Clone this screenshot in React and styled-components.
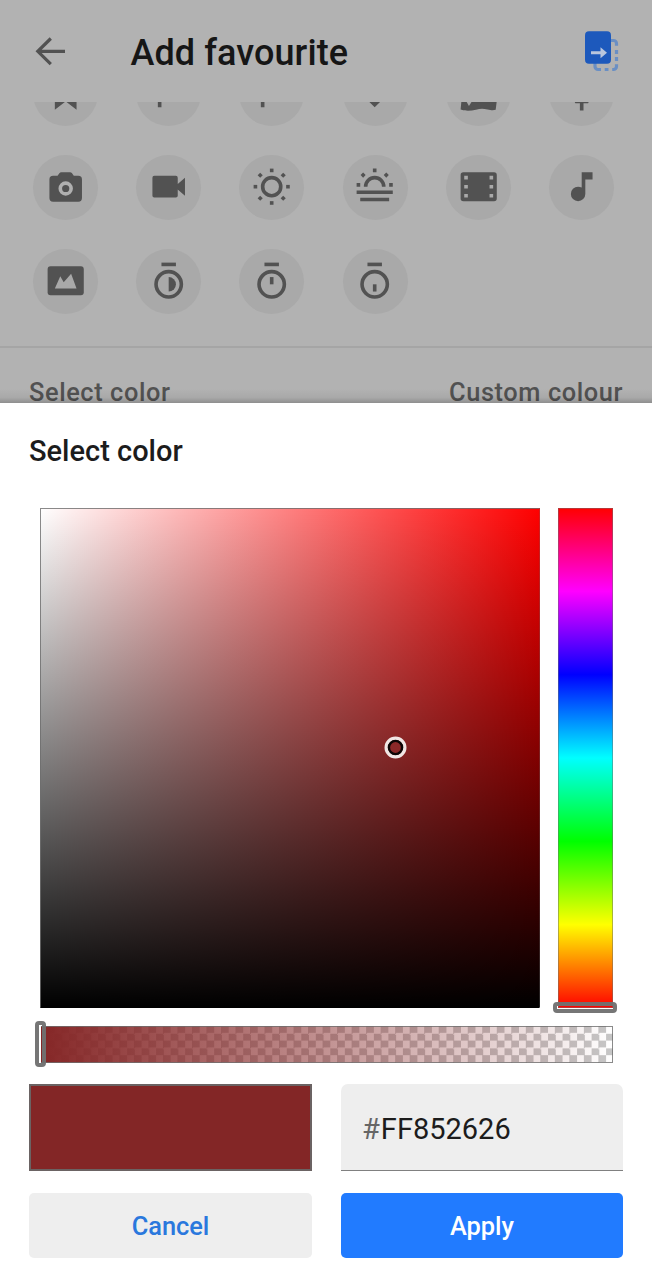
import React from "react";
import styled, { createGlobalStyle } from "styled-components";

const Global = createGlobalStyle`
  *, *::before, *::after { box-sizing: border-box; }
  body { margin: 0; background: #fff; font-family: Roboto, "Liberation Sans", sans-serif; }
  button { font-family: inherit; border: 0; padding: 0; }
`;

const Screen = styled.div`
  width: 652px;
  height: 1280px;
  display: flex;
  flex-direction: column;
  overflow: hidden;
`;

const Page = styled.div`
  position: relative;
  height: 403px;
  flex: none;
  overflow: hidden;
  background: #b2b2b2;
  &::after {
    content: "";
    position: absolute;
    inset: auto 0 0 0;
    height: 14px;
    background: linear-gradient(rgba(0, 0, 0, 0), rgba(0, 0, 0, 0.05) 60%, rgba(0, 0, 0, 0.2));
  }
`;

const Header = styled.header`
  height: 102px;
  display: flex;
  align-items: flex-start;
  padding: 28px 30px 0 33px;
`;

const BackArrow = styled.svg`
  width: 36px;
  height: 36px;
  margin-top: 5px;
`;

const Title = styled.h1`
  flex: 1;
  margin: 4px 0 0 61.500px;
  font-size: 36px;
  line-height: 42px;
  font-weight: 500;
  letter-spacing: 0.09px;
  color: #161616;
`;

const MoveIcon = styled.svg`
  width: 40px;
  height: 46px;
`;

const IconArea = styled.div`
  height: 246px;
  display: flex;
  flex-direction: column;
  justify-content: flex-end;
  overflow: hidden;
  padding: 0 0 32.4px 32.8px;
  border-bottom: 2px solid #a5a5a5;
`;

const IconGrid = styled.div`
  display: grid;
  grid-template-columns: repeat(6, 65px);
  column-gap: 38.25px;
  row-gap: 29px;
`;

const IconChip = styled.div`
  width: 65px;
  height: 65px;
  border-radius: 50%;
  background: #a9a9a9;
  display: grid;
  place-items: center;
  color: #525252;
  svg { width: 43.4px; height: 43.4px; overflow: visible; }
`;

const ColorRow = styled.div`
  display: flex;
  justify-content: space-between;
  padding: 29px 29px 0;
  font-size: 25.4px;
  line-height: 30px;
  font-weight: 500;
  letter-spacing: 0.58px;
  color: #525252;
`;

const Sheet = styled.section`
  flex: 1;
  background: #fff;
  padding: 31px 29px 0;
`;

const SheetTitle = styled.h2`
  margin: 0;
  font-size: 29px;
  line-height: 34px;
  font-weight: 500;
  color: #1c1c1c;
`;

const Picker = styled.div`
  display: grid;
  grid-template-columns: 500px 55px;
  column-gap: 18px;
  row-gap: 18px;
  padding: 40px 10px 0 11px;
`;

const Field = styled.div`
  position: relative;
  height: 500px;
  border: 1px solid;
  border-color: rgba(110, 110, 110, 0.8) rgba(110, 110, 110, 0.3) #000 rgba(110, 110, 110, 0.8);
  background: linear-gradient(to top, #000, rgba(0, 0, 0, 0)), linear-gradient(to right, #fff, #f00);
  background-origin: border-box;
`;

const FieldPointer = styled.svg`
  position: absolute;
  left: 343px;
  top: 227px;
  width: 23px;
  height: 23px;
`;

const Hue = styled.div`
  position: relative;
  height: 500px;
  border: 1px solid rgba(110, 110, 110, 0.5);
  background: linear-gradient(#f00, #f0f, #00f, #0ff, #0f0, #ff0, #f00);
  background-origin: border-box;
`;

const Alpha = styled.div`
  position: relative;
  grid-column: 1 / -1;
  height: 37px;
  border: 1px solid rgba(110, 110, 110, 0.8);
  background:
    linear-gradient(to right, #852626, rgba(133, 38, 38, 0)),
    repeating-conic-gradient(#c6c6c6 0 25%, #fff 0 50%) 0 0 / 14.52px 14.6px;
  background-origin: border-box;
`;

const Handle = styled.span`
  position: absolute;
  border: 4px solid rgba(112, 112, 112, 0.96);
  border-radius: 4px;
  ${(p) =>
    p.$vertical
      ? "left: -6px; top: -6px; width: 11px; height: 46px;"
      : "left: -6px; bottom: -6px; width: 64px; height: 11px;"}
  &::after {
    content: "";
    position: absolute;
    background: #fff;
    ${(p) =>
      p.$vertical
        ? "left: 0; top: 0; bottom: 0; width: 1.5px;"
        : "left: 0; right: 0; bottom: 0; height: 1.5px;"}
  }
`;

const Controls = styled.div`
  display: grid;
  grid-template-columns: 283px 282px;
  grid-template-rows: 87px 65px;
  column-gap: 29px;
  row-gap: 22px;
  margin-top: 21px;
`;

const Swatch = styled.div`
  background: #832626;
  border: 2px solid #6b6363;
`;

const HexInput = styled.div`
  display: flex;
  align-items: center;
  padding: 3px 0 0 21px;
  background: #eee;
  border-bottom: 1px solid #808080;
  border-radius: 7px 7px 0 0;
  font-size: 29px;
  color: #1c1c1c;
`;

const Hash = styled.span`
  margin-right: 1px;
  color: #666;
`;

const Button = styled.button`
  border-radius: 5px;
  font-size: 25.4px;
  line-height: 30px;
  font-weight: 500;
  padding-top: 1px;
  background: ${(p) => (p.$primary ? "#217bff" : "#eee")};
  color: ${(p) => (p.$primary ? "#fff" : "#2a78dd")};
`;

const hole = "#a9a9a9";

const timer = (
  <>
    <path d="M8 2h8v2H8z" />
    <circle cx="12" cy="14" r="7" fill="none" stroke="currentColor" strokeWidth="2" />
  </>
);

const icons = [
  <path d="M6 3h12v18.5l-6-4.7-6 4.7z" />,
  <path d="M6 3h12v9H8v8.1H6z" />,
  <path d="M6 3h11l-2 5 2 5H8v7.1H6z" />,
  <path d="M12 20.1 3.5 11.6a5 5 0 0 1 8.5-6 5 5 0 0 1 8.5 6z" />,
  <>
    <path d="M2.5 12H21.6l.4 4.5-.6 5c-1.6.4-2.7.2-4.5-.2-2.7-.7-4.2-.5-6.4.1-2.8.6-5.5.9-8.5-.1L2.5 16z" />
    <path d="M4.7 16 6.600 19.300 8.8 16z" fill={hole} />
  </>,
  <path d="M12 2a5 5 0 0 1 5 5v8l-1.500 2.900H13v3.900h-2v-3.900H8.500L7 15V7a5 5 0 0 1 5-5z" />,
  <>
    <path d="M5 6h2.500L8.500 4.500Q8.900 4 9.600 4h4.800q.7 0 1.100.5L16.500 6H19a2 2 0 0 1 2 2v10.300a2 2 0 0 1-2 2H5a2 2 0 0 1-2-2V8a2 2 0 0 1 2-2z" />
    <circle cx="12" cy="13" r="3" fill="none" stroke="#b0b0b0" strokeWidth="2" />
  </>,
  <path d="M17 10.500V7a1 1 0 0 0-1-1H4a1 1 0 0 0-1 1v10a1 1 0 0 0 1 1h12a1 1 0 0 0 1-1v-3.500l4 3.500V7z" />,
  <>
    <circle cx="12" cy="12" r="5" fill="none" stroke="currentColor" strokeWidth="2" />
    {[0, 45, 90, 135, 180, 225, 270, 315].map((a) => (
      <path key={a} d="M11 2h2v2h-2z" transform={`rotate(${a} 12 12)`} />
    ))}
  </>,
  <>
    <path d="M6 12a6 6 0 0 1 12 0h-2a4 4 0 0 0-8 0z" />
    <path d="M11 2h2v2h-2zM2 10h2v2H2zM20 10h2v2h-2zM2 14.100h20v2H2zM4 18.100h16v2H4z" />
    <path d="M5.600 4.200 7 5.600 5.600 7 4.200 5.600zM18.400 4.200 19.800 5.600 18.400 7 17 5.600z" />
  </>,
  <path fillRule="evenodd" d="M3.500 4h17A1.500 1.500 0 0 1 22 5.500v13a1.500 1.500 0 0 1-1.500 1.500h-17A1.500 1.500 0 0 1 2 18.500v-13A1.500 1.500 0 0 1 3.500 4zM4 6v2h2V6zM4 11v2h2v-2zM4 16v2h2v-2zM18 6v2h2V6zM18 11v2h2v-2zM18 16v2h2v-2z" />,
  <path d="M12 4h6v4h-4v8a4 4 0 1 1-4-4c.7 0 1.400.2 2 .5z" />,
  <>
    <rect x="2" y="4" width="20" height="16" rx="1.6" />
    <path d="M6 16.300 9 9.600l1.900 3.200L15 8.200l3 8.100z" fill={hole} />
  </>,
  <>{timer}<path d="M12 10a4 4 0 0 1 0 8z" /></>,
  <>{timer}<path d="M11 10h2v4h-2z" /></>,
  <>{timer}<path d="M11 14h2v4h-2z" /></>,
];

export default function App() {
  return (
    <Screen>
      <Global />
      <Page>
        <Header>
          <BackArrow viewBox="0 0 36 36" fill="none" stroke="#525252" strokeWidth="3.2">
            <path d="M32 18.300H5M17.800 5.500 4.800 18.300l13 12.800" />
          </BackArrow>
          <Title>Add favourite</Title>
          <MoveIcon viewBox="0 0 40 46">
            <g fill="none" stroke="#6a8fc4" strokeWidth="3.2">
              <path d="M29 12.500h2.500a3 3 0 0 1 3 3v2.200M34.500 22v4M34.500 29v4M34.500 36.300v2.200a3 3 0 0 1-3 3h-1.300M26.500 41.500h-3.800M19 41.500h-3a3 3 0 0 1-3-3V35" />
            </g>
            <rect x="3" y="3.300" width="26" height="32.500" rx="4" fill="#1d59bc" />
            <path d="M9 23.200h9.500v-4l6.500 5.500-6.500 5.500v-4H9z" fill="#b9c6dd" />
          </MoveIcon>
        </Header>
        <IconArea>
          <IconGrid>
            {icons.map((icon, i) => (
              <IconChip key={i}>
                <svg viewBox="0 0 24 24" fill="currentColor">{icon}</svg>
              </IconChip>
            ))}
          </IconGrid>
        </IconArea>
        <ColorRow>
          <span>Select color</span>
          <span>Custom colour</span>
        </ColorRow>
      </Page>
      <Sheet>
        <SheetTitle>Select color</SheetTitle>
        <Picker>
          <Field>
            <FieldPointer viewBox="0 0 23 23">
              <circle cx="11.500" cy="11.500" r="9.300" fill="none" stroke="#f0e6e4" strokeWidth="3.400" />
              <circle cx="11.500" cy="11.500" r="6.600" fill="#8b2828" stroke="#0c0606" strokeWidth="2.400" />
            </FieldPointer>
          </Field>
          <Hue><Handle /></Hue>
          <Alpha><Handle $vertical /></Alpha>
        </Picker>
        <Controls>
          <Swatch />
          <HexInput><Hash>#</Hash>FF852626</HexInput>
          <Button>Cancel</Button>
          <Button $primary>Apply</Button>
        </Controls>
      </Sheet>
    </Screen>
  );
}
